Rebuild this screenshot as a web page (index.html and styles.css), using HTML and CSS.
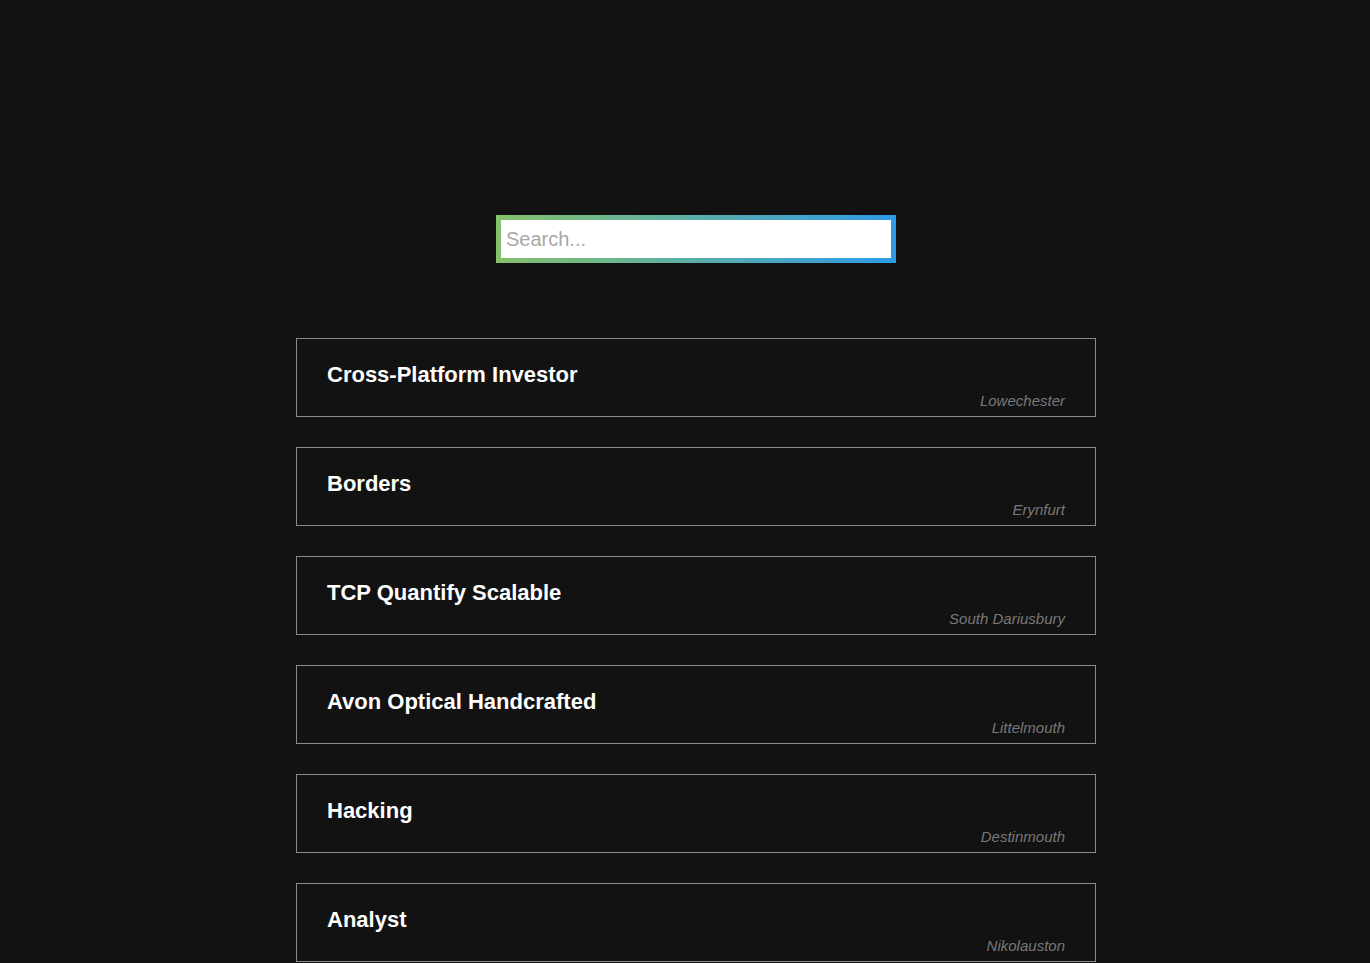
FILE: index.html
```html
<!DOCTYPE html>
<html>
<head>
<meta charset="utf-8">
<link rel="stylesheet" href="styles.css">
</head>
<body>
<div class="page">
  <div class="search-wrap">
    <input class="search" type="text" placeholder="Search...">
  </div>
  <ul class="list">
    <li class="card"><h3 class="title">Cross-Platform Investor</h3><span class="city">Lowechester</span></li>
    <li class="card"><h3 class="title">Borders</h3><span class="city">Erynfurt</span></li>
    <li class="card"><h3 class="title">TCP Quantify Scalable</h3><span class="city">South Dariusbury</span></li>
    <li class="card"><h3 class="title">Avon Optical Handcrafted</h3><span class="city">Littelmouth</span></li>
    <li class="card"><h3 class="title">Hacking</h3><span class="city">Destinmouth</span></li>
    <li class="card"><h3 class="title">Analyst</h3><span class="city">Nikolauston</span></li>
  </ul>
</div>
</body>
</html>
```
FILE: styles.css
```css
html, body {
  margin: 0;
  padding: 0;
  background: #121212;
  height: 963px;
  overflow: hidden;
}
.page {
  display: flex;
  flex-direction: column;
  align-items: center;
  padding: 215px 0 0 22px;
  font-family: "Liberation Sans", Arial, sans-serif;
}
.search-wrap {
  width: 390px;
  padding: 5px;
  background: linear-gradient(to right, #86c06a, #2d9be8);
}
.search {
  display: block;
  width: 100%;
  height: 38px;
  box-sizing: border-box;
  border: none;
  outline: none;
  margin: 0;
  padding: 0 5px;
  background: #fff;
  font-family: "Liberation Sans", Arial, sans-serif;
  font-size: 20px;
  color: #333;
}
.search::placeholder {
  color: #a8a8a8;
}
.list {
  list-style: none;
  margin: 75px 0 0;
  padding: 0;
  width: 800px;
  display: flex;
  flex-direction: column;
  gap: 30px;
}
.card {
  box-sizing: border-box;
  height: 79px;
  border: 1px solid #8a8a8a;
  padding: 23px 30px 0 30px;
  display: flex;
  flex-direction: column;
}
.title {
  margin: 0;
  font-size: 22px;
  font-weight: bold;
  color: #fff;
  line-height: 25px;
}
.city {
  margin-top: 5px;
  align-self: flex-end;
  font-size: 15px;
  font-style: italic;
  color: #787878;
  line-height: 17px;
}
```
